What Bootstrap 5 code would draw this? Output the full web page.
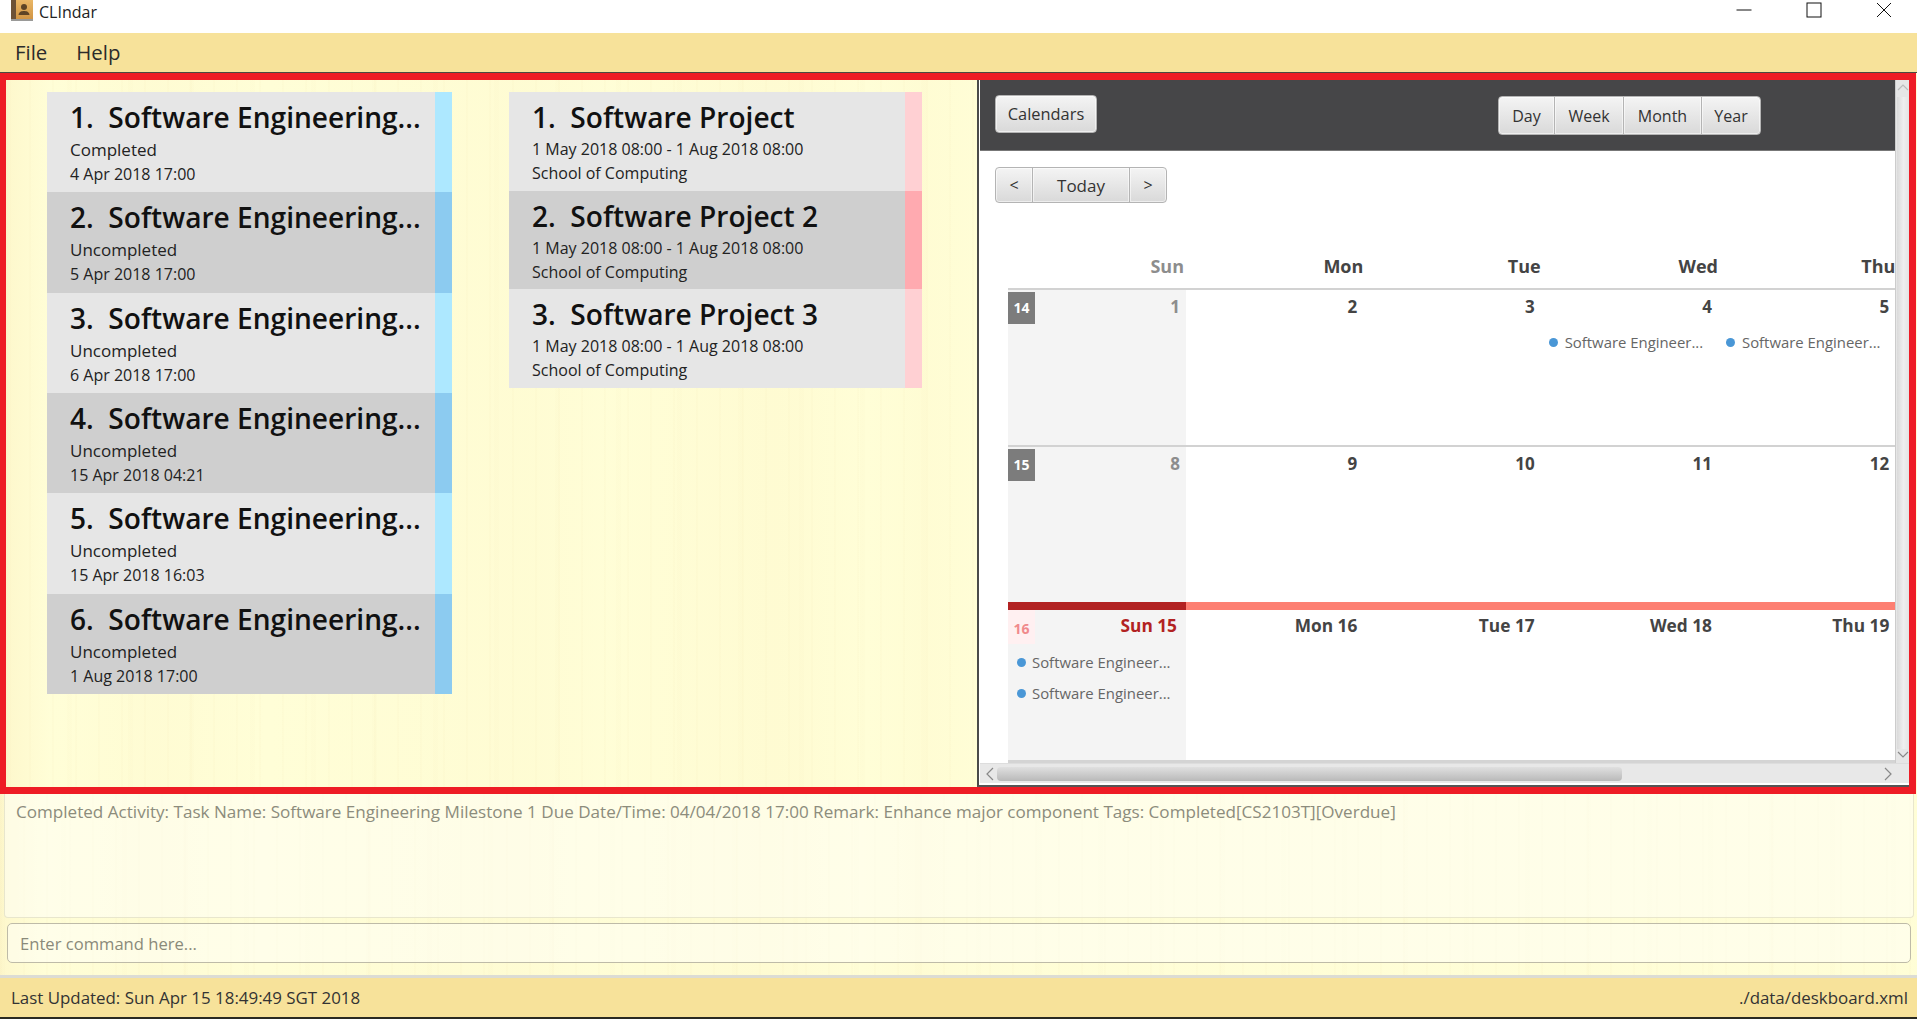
<!DOCTYPE html>
<html lang="en">
<head>
<meta charset="UTF-8">
<title>CLIndar</title>
<link href="https://cdn.jsdelivr.net/npm/bootstrap@5.3.3/dist/css/bootstrap.min.css" rel="stylesheet">
<script src="https://cdn.jsdelivr.net/npm/bootstrap@5.3.3/dist/js/bootstrap.bundle.min.js"></script>
<style>
html, body { height: 100%; margin: 0; overflow: hidden; }
body { font-family: "Open Sans", "Noto Sans", sans-serif; color: #222; background: #fff; }
.app { width: 1917px; height: 1019px; background: #fffdd6; }
.wood {
    background-color: #fffed7;
    background-image:
        repeating-linear-gradient(90deg, rgba(235,215,160,.06) 0 2px, rgba(235,215,160,0) 2px 23px),
        repeating-linear-gradient(90deg, rgba(235,215,160,.04) 0 5px, rgba(235,215,160,0) 5px 61px),
        linear-gradient(90deg, rgba(248,225,165,.22) 0, rgba(248,225,165,0) 45px, rgba(248,225,165,.08) 150px, rgba(248,225,165,0) 260px, rgba(248,225,165,.08) 520px, rgba(248,225,165,.01) 600px, rgba(248,225,165,.10) 770px, rgba(248,225,165,0) 860px, rgba(248,225,165,.07) 920px, rgba(248,225,165,.01) 977px);
}
.titlebar { height: 33px; background: #fff; }
.app-icon { margin-left: 11px; display: block; }
.app-title { margin-left: 6px; margin-top: 1px; font-size: 16px; line-height: 22px; color: #222; }
.win-btns { gap: 54px; margin-right: 25px; margin-top: 2px; }
.menubar { height: 40px; background: #f7e29a; border-bottom: 1px solid #4a4a40; padding-left: 15px; gap: 29px; font-size: 20.4px; color: #2b2b2b; }
.main-area { height: 721px; border: 7px solid #ee1c25; border-left-width: 6px; border-right-width: 7px; margin-right: 1px; }
.lists { width: 971px; padding: 12px 0 0 41px; gap: 57px; }
.task-list { width: 405px; flex: none; }
.event-list { width: 413px; flex: none; }
.entry { background: #e6e6e6; padding-left: 23px; overflow: hidden; }
.task-list .entry { height: 100.33px; }
.event-list .entry { height: 98.67px; }
.entry:nth-child(even) { background: #cfcfcf; }
.entry-text { min-width: 0; }
.entry-name { font-size: 28.1px; font-weight: 600; line-height: 36px; margin-top: 7px; color: #111; white-space: pre; }
.entry-sub { font-size: 16px; line-height: 25px; color: #222; white-space: nowrap; }
.entry-sub.first { margin-top: 2px; }
.task-list .entry-sub.first { font-size: 17px; }
.event-list .entry-sub { line-height: 24px; }
.strip { width: 17px; background: #ade8ff; flex: none; }
.entry:nth-child(even) .strip { background: #8ccbf0; }
.event-list .strip { background: #ffd0d3; }
.event-list .entry:nth-child(even) .strip { background: #ffaab0; }
.cal-pane { width: 932px; height: 707px; border-left: 2px solid #4a4a4a; border-bottom: 2px solid #555; padding-left: 1px; background: #fff; overflow: hidden; }
.cal-body { height: 683px; min-height: 0; }
.cal-main { width: 915px; overflow: hidden; }
.cal-head { height: 71px; background: #464648; border-bottom: 1px solid #777; padding: 15px 0 0 15px; }
.fx-btn { font-family: "Open Sans", sans-serif; font-size: 16.4px; color: #333; height: 38px; padding: 0 11px; border: 1px solid #b4b4b4; border-radius: 4px; background: linear-gradient(#f4f4f4, #d9d9d9); box-shadow: inset 0 0 0 1px rgba(255,255,255,.55); line-height: 1; }
.fx-btn:hover { color: #333; border-color: #b4b4b4; background: linear-gradient(#f4f4f4, #d9d9d9); }
.cal-btn { width: 102px; padding: 0; }
.view-group { margin-left: 401px; margin-top: 1px; }
.view-group .fx-btn { height: 39px; padding: 0; font-size: 16px; }
.view-day { width: 57px; }
.view-week { width: 70px; }
.view-month { width: 79px; }
.view-year { width: 60px; }
.nav-row { height: 137px; padding: 16px 0 0 15px; }
.nav-row .fx-btn { height: 36px; }
.nav-arrow { width: 38px; padding: 0; font-size: 16px; }
.nav-today { width: 98px; padding: 0; font-size: 17px; }
.day-grid { padding-left: 28px; }
.cal-cols { display: grid; grid-template-columns: 178px repeat(4, 177.33px); }
.day-names { height: 0; }
.head-cell { font-size: 18px; font-weight: 700; color: #444; text-align: right; white-space: nowrap; line-height: 24px; transform: translateY(-34px); }
.head-cell.sun { color: #8d8d8d; padding-right: 2px; }
.week-row { height: 157px; border-top: 2px solid #d2d2d2; }
.week-row.today-row { border-top: 8px solid #fd7f72; height: 158px; }
.cell { padding: 5px 6px 0 6px; text-align: right; position: relative; min-width: 0; }
.cell.sun { background: #f4f4f4; }
.today-row .cell.sun { margin-top: -8px; border-top: 8px solid #b22222; }
.day-num { font-size: 17px; font-weight: 700; color: #444; line-height: 24px; white-space: nowrap; }
.cell.sun .day-num { color: #8d8d8d; }
.today-row .day-num { font-size: 17.3px; }
.today-row .cell { padding-top: 4px; }
.today-row .cell.sun .day-num { color: #b22222; padding-right: 3px; }
.week-tag { position: absolute; left: 0; top: 2px; width: 27px; height: 32px; background: #7c7c7c; color: #fff; font-size: 14px; font-weight: 700; text-align: center; line-height: 32px; }
.week-tag.now { top: 0; height: 34px; line-height: 38px; background: #fff0f1; color: #f08a8c; }
.cal-event { gap: 6px; font-size: 14.9px; line-height: 20px; color: #666; white-space: nowrap; }
.ev-dot { width: 9px; height: 9px; border-radius: 50%; background: #4a97d6; flex: none; }
.ev-row { margin: 13px 0 0 2px; gap: 7px; }
.ev-stack { padding-left: 3px; margin-top: 14px; gap: 11px; }
.cal-bottom { border-top: 3px solid #d4d4d4; margin-left: 28px; width: 887px; }
.vscroll { width: 14px; background: #e6e6e6; border-left: 1px solid #ccc; }
.vthumb { height: 652px; margin: 3px 0 0 2px; background: linear-gradient(90deg, #dadada, #efefef 50%, #e2e2e2); flex: none; }
.hscroll { height: 20px; background: #e8e8e8; border-top: 1px solid #ddd; padding-left: 5px; }
.hthumb { width: 625px; height: 14px; margin-left: 2px; border-radius: 4px; background: linear-gradient(#e0e0e0, #b9b9b9); }
.output-box { height: 124px; margin: 0 3px 0 4px; padding: 5px 11px; border: 1px solid #e8e6cd; border-top: 0; border-radius: 0 0 4px 4px; font-size: 17.08px; color: #8c8c7c; background-color: rgba(255,255,255,.45); white-space: nowrap; }
.cmd-box { height: 40px; margin: 5px 0 0 7px; width: 1904px; padding: 0 12px; font-family: "Open Sans", sans-serif; font-size: 16.6px; color: #555; background: rgba(255,255,255,.45); border: 1px solid #bebba8; border-radius: 5px; }
.cmd-box::placeholder { color: #8a8a7a; opacity: 1; }
.cmd-box:focus { outline: 0; box-shadow: none; background: rgba(255,255,255,.45); border-color: #bebba8; }
.cmd-gap { height: 9px; }
.status-bar { height: 44px; border-top: 3px solid #dcdcd4; border-bottom: 2px solid #2a2a22; background: #f7e29a; padding: 0 9px 0 11px; font-size: 16.9px; color: #333; }
</style>
</head>
<body>
<div class="app d-flex flex-column">

    <div class="titlebar d-flex align-items-start justify-content-between">
        <div class="d-flex align-items-start">
            <svg class="app-icon" width="22" height="21" viewBox="0 0 22 21">
                <defs><linearGradient id="bookFill" x1="0" y1="0" x2="0" y2="1"><stop offset="0" stop-color="#eab766"/><stop offset="1" stop-color="#cf9343"/></linearGradient></defs>
                <rect x="0" y="0" width="22" height="20" fill="url(#bookFill)"/>
                <rect x="0" y="0" width="5" height="20" fill="#6d5236"/>
                <rect x="0" y="19" width="22" height="2" fill="#9a9a98"/>
                <circle cx="13" cy="7" r="3" fill="#5e4426"/>
                <path d="M7.5 15 C8 11.5 10.5 11 13 11 C15.5 11 18 11.5 18.5 15 Z" fill="#5e4426"/>
            </svg>
            <span class="app-title">CLIndar</span>
        </div>
        <div class="win-btns d-flex align-items-center">
            <svg width="16" height="16" viewBox="0 0 16 16"><path d="M0.5 8 H15.5" stroke="#111" stroke-width="1"/></svg>
            <svg width="16" height="16" viewBox="0 0 16 16"><rect x="1" y="1" width="14" height="14" fill="none" stroke="#111" stroke-width="1"/></svg>
            <svg width="16" height="16" viewBox="0 0 16 16"><path d="M1 1 L15 15 M15 1 L1 15" stroke="#111" stroke-width="1"/></svg>
        </div>
    </div>

    <div class="menubar d-flex align-items-center">
        <span>File</span>
        <span>Help</span>
    </div>

    <div class="main-area wood d-flex">
        <div class="lists d-flex align-items-start">
            <div class="task-list">
                <div class="entry d-flex justify-content-between"><div class="entry-text"><div class="entry-name">1.  Software Engineering...</div><div class="entry-sub first">Completed</div><div class="entry-sub">4 Apr 2018 17:00</div></div><div class="strip"></div></div>
                <div class="entry d-flex justify-content-between"><div class="entry-text"><div class="entry-name">2.  Software Engineering...</div><div class="entry-sub first">Uncompleted</div><div class="entry-sub">5 Apr 2018 17:00</div></div><div class="strip"></div></div>
                <div class="entry d-flex justify-content-between"><div class="entry-text"><div class="entry-name">3.  Software Engineering...</div><div class="entry-sub first">Uncompleted</div><div class="entry-sub">6 Apr 2018 17:00</div></div><div class="strip"></div></div>
                <div class="entry d-flex justify-content-between"><div class="entry-text"><div class="entry-name">4.  Software Engineering...</div><div class="entry-sub first">Uncompleted</div><div class="entry-sub">15 Apr 2018 04:21</div></div><div class="strip"></div></div>
                <div class="entry d-flex justify-content-between"><div class="entry-text"><div class="entry-name">5.  Software Engineering...</div><div class="entry-sub first">Uncompleted</div><div class="entry-sub">15 Apr 2018 16:03</div></div><div class="strip"></div></div>
                <div class="entry d-flex justify-content-between"><div class="entry-text"><div class="entry-name">6.  Software Engineering...</div><div class="entry-sub first">Uncompleted</div><div class="entry-sub">1 Aug 2018 17:00</div></div><div class="strip"></div></div>
            </div>
            <div class="event-list">
                <div class="entry d-flex justify-content-between"><div class="entry-text"><div class="entry-name">1.  Software Project</div><div class="entry-sub first">1 May 2018 08:00 - 1 Aug 2018 08:00</div><div class="entry-sub">School of Computing</div></div><div class="strip"></div></div>
                <div class="entry d-flex justify-content-between"><div class="entry-text"><div class="entry-name">2.  Software Project 2</div><div class="entry-sub first">1 May 2018 08:00 - 1 Aug 2018 08:00</div><div class="entry-sub">School of Computing</div></div><div class="strip"></div></div>
                <div class="entry d-flex justify-content-between"><div class="entry-text"><div class="entry-name">3.  Software Project 3</div><div class="entry-sub first">1 May 2018 08:00 - 1 Aug 2018 08:00</div><div class="entry-sub">School of Computing</div></div><div class="strip"></div></div>
            </div>
        </div>

        <div class="cal-pane d-flex flex-column">
            <div class="cal-body d-flex">
                <div class="cal-main d-flex flex-column">
                    <div class="cal-head d-flex align-items-start">
                        <button type="button" class="btn fx-btn cal-btn">Calendars</button>
                        <div class="btn-group view-group">
                            <button type="button" class="btn fx-btn view-day">Day</button>
                            <button type="button" class="btn fx-btn view-week">Week</button>
                            <button type="button" class="btn fx-btn view-month">Month</button>
                            <button type="button" class="btn fx-btn view-year">Year</button>
                        </div>
                    </div>
                    <div class="nav-row">
                        <div class="btn-group">
                            <button type="button" class="btn fx-btn nav-arrow">&lt;</button>
                            <button type="button" class="btn fx-btn nav-today">Today</button>
                            <button type="button" class="btn fx-btn nav-arrow">&gt;</button>
                        </div>
                    </div>
                    <div class="day-grid">
                        <div class="cal-cols day-names">
                            <div class="head-cell sun">Sun</div>
                            <div class="head-cell">Mon</div>
                            <div class="head-cell">Tue</div>
                            <div class="head-cell">Wed</div>
                            <div class="head-cell">Thu</div>
                        </div>
                        <div class="cal-cols week-row">
                            <div class="cell sun"><span class="week-tag">14</span><div class="day-num">1</div></div>
                            <div class="cell"><div class="day-num">2</div></div>
                            <div class="cell"><div class="day-num">3</div></div>
                            <div class="cell">
                                <div class="day-num">4</div>
                                <div class="cal-event ev-row d-flex align-items-center"><span class="ev-dot"></span><span>Software Engineer...</span></div>
                            </div>
                            <div class="cell">
                                <div class="day-num">5</div>
                                <div class="cal-event ev-row d-flex align-items-center"><span class="ev-dot"></span><span>Software Engineer...</span></div>
                            </div>
                        </div>
                        <div class="cal-cols week-row">
                            <div class="cell sun"><span class="week-tag">15</span><div class="day-num">8</div></div>
                            <div class="cell"><div class="day-num">9</div></div>
                            <div class="cell"><div class="day-num">10</div></div>
                            <div class="cell"><div class="day-num">11</div></div>
                            <div class="cell"><div class="day-num">12</div></div>
                        </div>
                        <div class="cal-cols week-row today-row">
                            <div class="cell sun">
                                <span class="week-tag now">16</span>
                                <div class="day-num">Sun 15</div>
                                <div class="ev-stack d-flex flex-column">
                                    <div class="cal-event d-flex align-items-center"><span class="ev-dot"></span><span>Software Engineer...</span></div>
                                    <div class="cal-event d-flex align-items-center"><span class="ev-dot"></span><span>Software Engineer...</span></div>
                                </div>
                            </div>
                            <div class="cell"><div class="day-num">Mon 16</div></div>
                            <div class="cell"><div class="day-num">Tue 17</div></div>
                            <div class="cell"><div class="day-num">Wed 18</div></div>
                            <div class="cell"><div class="day-num">Thu 19</div></div>
                        </div>
                    </div>
                    <div class="cal-bottom"></div>
                </div>
                <div class="vscroll d-flex flex-column align-items-center">
                    <svg class="flex-shrink-0" width="12" height="14" viewBox="0 0 12 14"><path d="M1 10 L6 5 L11 10" fill="none" stroke="#bbb" stroke-width="1.2"/></svg>
                    <div class="vthumb w-100"></div>
                    <svg class="flex-shrink-0" width="12" height="12" viewBox="0 0 12 12"><path d="M1 3 L6 8 L11 3" fill="none" stroke="#888" stroke-width="1.2"/></svg>
                </div>
            </div>
            <div class="hscroll d-flex align-items-center">
                <svg width="10" height="14" viewBox="0 0 10 14"><path d="M8 1 L2 7 L8 13" fill="none" stroke="#888" stroke-width="1.2"/></svg>
                <div class="hthumb"></div>
                <svg class="ms-auto me-3" width="10" height="14" viewBox="0 0 10 14"><path d="M2 1 L8 7 L2 13" fill="none" stroke="#888" stroke-width="1.2"/></svg>
            </div>
        </div>
    </div>

    <div class="wood flex-grow-1 d-flex flex-column">
        <div class="output-box">Completed Activity: Task Name: Software Engineering Milestone 1 Due Date/Time: 04/04/2018 17:00 Remark: Enhance major component Tags: Completed[CS2103T][Overdue]</div>
        <input type="text" class="cmd-box" placeholder="Enter command here...">
        <div class="cmd-gap"></div>
    </div>

    <div class="status-bar d-flex align-items-center justify-content-between">
        <span>Last Updated: Sun Apr 15 18:49:49 SGT 2018</span>
        <span>./data/deskboard.xml</span>
    </div>
</div>
</body>
</html>
